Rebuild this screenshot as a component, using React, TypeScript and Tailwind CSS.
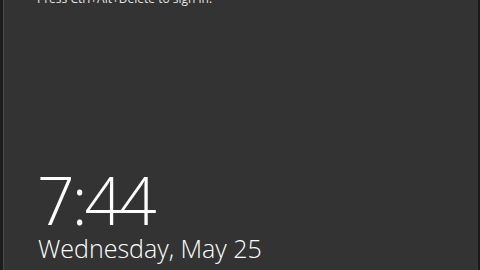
export default function App() {
  return (
    <div className="flex h-[270px] w-[480px] overflow-hidden bg-[#151515]">
      <div className="w-[3px] bg-[#1c1c1c]" />
      <div className="w-px bg-[#4a4a4a]" />
      <div
        className="flex flex-1 flex-col bg-[#333333] pl-[33px] text-white"
        style={{ fontFamily: '"Open Sans", "Noto Sans", sans-serif' }}
      >
        <div className="-mt-[9px] text-[12px] leading-[16px] text-[#e6e6e6]">
          Press Ctrl+Alt+Delete to sign in.
        </div>
        <div className="mt-[159px] text-[66px] font-light leading-[66px] tracking-[-3px]">
          7:44
        </div>
        <div className="mt-px pl-[1px] text-[25px] font-light leading-[30px]">
          Wednesday, May 25
        </div>
      </div>
      <div className="w-[2px] bg-[#1a1a1a]" />
    </div>
  );
}
